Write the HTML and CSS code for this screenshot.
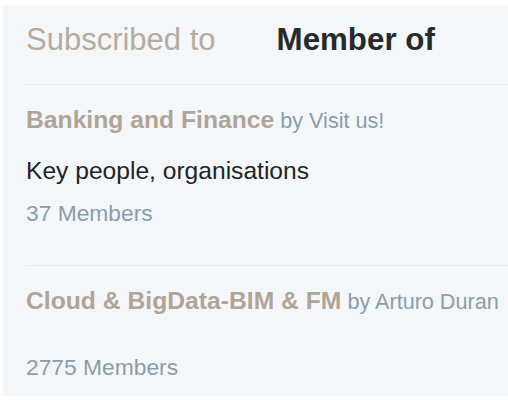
FILE: index.html
```html
<!DOCTYPE html>
<html lang="en">
<head>
<meta charset="utf-8">
<title>Groups</title>
<link rel="stylesheet" href="styles.css">
</head>
<body>
  <section class="panel">
    <nav class="tabs">
      <a class="tab" href="#">Subscribed to</a>
      <a class="tab tab-active" href="#">Member of</a>
    </nav>
    <ul class="groups">
      <li class="group">
        <div class="group-head">
          <a class="group-name" href="#">Banking and Finance</a>
          <span class="group-owner">by Visit us!</span>
        </div>
        <p class="group-desc">Key people, organisations</p>
        <div class="group-meta">37 Members</div>
      </li>
      <li class="group">
        <div class="group-head">
          <a class="group-name" href="#">Cloud &amp; BigData-BIM &amp; FM</a>
          <span class="group-owner">by Arturo Duran</span>
        </div>
        <p class="group-desc"></p>
        <div class="group-meta">2775 Members</div>
      </li>
    </ul>
  </section>
</body>
</html>
```

FILE: styles.css
```css
html, body {
  margin: 0;
  padding: 0;
  background: #ffffff;
}

body {
  font-family: "Liberation Sans", Arial, sans-serif;
  overflow: hidden;
}

.panel {
  margin: 5px 0 0 3px;
  height: 391px;
  background: #f4f7fa;
  padding: 17px 0 0 23px;
  box-sizing: border-box;
  overflow: hidden;
}

.tabs {
  display: flex;
  gap: 61px;
  padding-bottom: 26px;
  border-bottom: 1px solid #e5e9ed;
}

.tab {
  font-size: 31px;
  line-height: 36px;
  color: #b6ab9f;
  text-decoration: none;
  white-space: nowrap;
}

.tab-active {
  color: #262a2d;
  font-weight: bold;
  font-size: 31.3px;
}

.groups {
  list-style: none;
  margin: 0;
  padding: 0;
}

.group {
  padding: 20px 0 38px 0;
  border-bottom: 1px solid #e5e9ed;
}

.group-head {
  display: flex;
  align-items: baseline;
  gap: 6px;
  white-space: nowrap;
  line-height: 30px;
}

.group-name {
  font-size: 24.7px;
  font-weight: bold;
  color: #b0a497;
  text-decoration: none;
}

.group-owner {
  font-size: 21.6px;
  color: #8a9dab;
}

.group-desc {
  margin: 20px 0 0 0;
  font-size: 24.6px;
  line-height: 30px;
  color: #1f2326;
}

.group-desc:empty {
  height: 3px;
}

.group-meta {
  margin-top: 13px;
  font-size: 22.8px;
  line-height: 28px;
  color: #8a9dab;
}
```
